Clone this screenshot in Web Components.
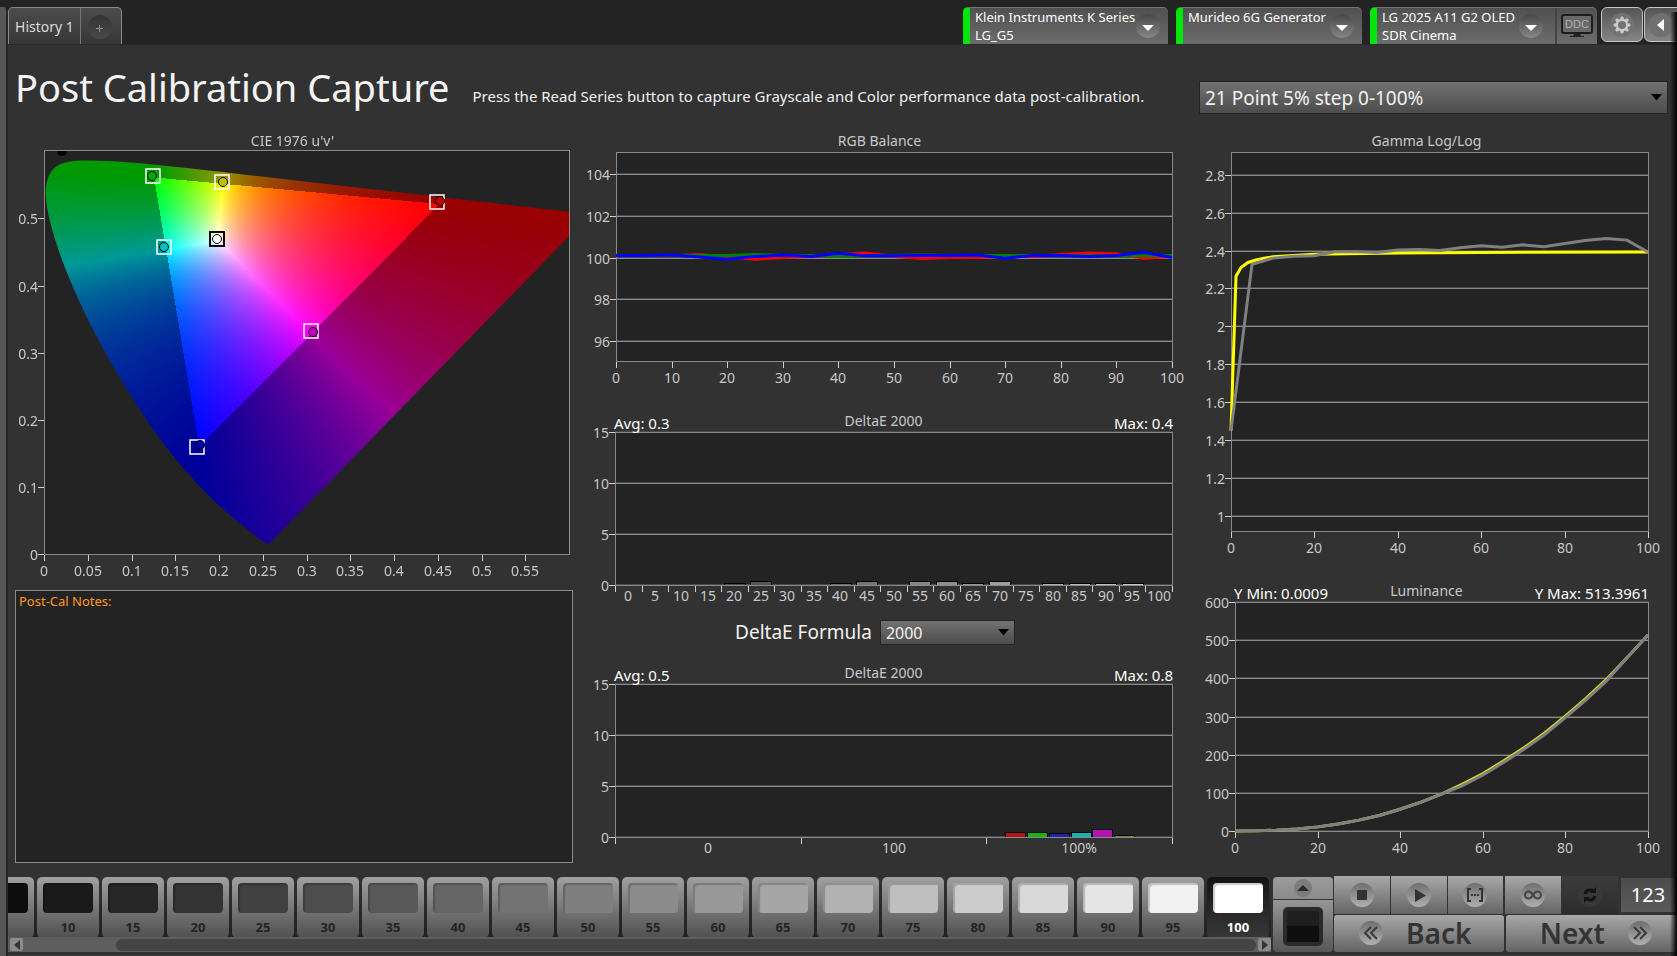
<!DOCTYPE html>
<html lang="en">
<head>
<meta charset="utf-8">
<meta name="viewport" content="width=device-width, initial-scale=1">
<title>Post Calibration Capture</title>
<style>
    * {
        box-sizing: border-box;
    }

    body {
        margin: 0;
        background-color: #232323;
        color: #e8e8e8;
        font-family: "Noto Sans", sans-serif;
        font-size: 14px;
    }
</style>
</head>
<body>

<app-shell>
    <history-tabs slot="tabs">History 1</history-tabs>
    <device-tab slot="devices" style="--tab-width: 205px">Klein Instruments K Series<br>LG_G5</device-tab>
    <device-tab slot="devices" style="--tab-width: 186px">Murideo 6G Generator</device-tab>
    <device-tab slot="devices" style="--tab-width: 227px" ddc>LG 2025 A11 G2 OLED<br>SDR Cinema</device-tab>
    <corner-buttons slot="devices"></corner-buttons>

    <page-heading slot="heading" heading="Post Calibration Capture">Press the Read Series button to capture Grayscale and Color performance data post-calibration.</page-heading>
    <drop-down slot="series" label="Read series" value="21 Point 5% step 0-100%"></drop-down>

    <data-chart id="cie" slot="left" heading="CIE 1976 u'v'"></data-chart>
    <notes-box slot="left">Post-Cal Notes:</notes-box>

    <data-chart id="balance" slot="center" heading="RGB Balance"></data-chart>
    <data-chart id="deltaGray" slot="center" heading="DeltaE 2000" low="Avg: 0.3" high="Max: 0.4"></data-chart>
    <formula-row slot="center"></formula-row>
    <data-chart id="deltaColor" slot="center" heading="DeltaE 2000" low="Avg: 0.5" high="Max: 0.8"></data-chart>

    <data-chart id="gamma" slot="right" heading="Gamma Log/Log"></data-chart>
    <data-chart id="luminance" slot="right" heading="Luminance" low="Y Min: 0.0009" high="Y Max: 513.3961"></data-chart>

    <patch-strip slot="footer"></patch-strip>
    <patch-preview slot="footer"></patch-preview>
    <transport-bar slot="footer"></transport-bar>
</app-shell>

<script>
class AppShell extends HTMLElement {

    constructor() {
        super();
        this.shadowDOM = this.attachShadow({mode: "open"});
    }

    connectedCallback() {
        this.shadowDOM.innerHTML = `
        <style>
        * {
            box-sizing: border-box;
        }

        :host {
            display: flex;
            position: relative;
            min-height: 100vh;
            overflow: hidden;
        }

        :host::after {
            content: "";
            position: absolute;
            top: 12px;
            right: 0;
            bottom: 0;
            width: 7px;
            background: linear-gradient(to right, rgba(0, 0, 0, 0), #000);
            pointer-events: none;
        }

        .rail {
            flex: none;
            width: 8px;
            margin-top: 7px;
            border-right: 2px solid #262626;
            border-top-right-radius: 4px;
            background-color: #565656;
        }

        .page {
            flex: 1;
            min-width: 0;
            display: flex;
            flex-direction: column;
        }

        header {
            display: flex;
            justify-content: space-between;
            align-items: flex-end;
            height: 44px;
        }

        .devices {
            display: flex;
            gap: 8px;
        }

        main {
            flex: 1;
            display: grid;
            grid-template-columns: minmax(0, 558fr) minmax(0, 600fr) minmax(0, 469fr);
            grid-template-rows: 87px auto;
            column-gap: 13px;
            padding: 0 9px 0 7px;
            border-top: 1px solid #2a2a2a;
            background-color: #323232;
        }

        .heading {
            grid-column: 1 / 3;
        }

        .series {
            padding-top: 36px;
        }

        .left, .center, .right {
            display: flex;
            flex-direction: column;
        }

        .left {
            gap: 9px;
        }

        .center {
            padding-right: 13px;
        }

        .right {
            padding: 0 19px 0 5px;
            gap: 24px;
        }

        footer {
            display: flex;
            height: 80px;
            padding-bottom: 3px;
            background-color: #323232;
            border-bottom: 1px solid #3c3c3c;
        }
        </style>
        <div class="rail"></div>
        <div class="page">
            <header>
                <slot name="tabs"></slot>
                <div class="devices"><slot name="devices"></slot></div>
            </header>
            <main>
                <div class="heading"><slot name="heading"></slot></div>
                <div class="series"><slot name="series"></slot></div>
                <div class="left"><slot name="left"></slot></div>
                <div class="center"><slot name="center"></slot></div>
                <div class="right"><slot name="right"></slot></div>
            </main>
            <footer><slot name="footer"></slot></footer>
        </div>
        `;
    }
}

class HistoryTabs extends HTMLElement {

    constructor() {
        super();
        this.shadowDOM = this.attachShadow({mode: "open"});
    }

    connectedCallback() {
        this.shadowDOM.innerHTML = `
        <style>
        :host {
            display: flex;
            box-sizing: border-box;
            width: 114px;
            height: 37px;
            border: 1px solid #8a8a8a;
            border-bottom: none;
            border-radius: 5px 5px 0 0;
            background: linear-gradient(#4c4c4c, #363636);
        }

        button {
            border: none;
            padding: 0;
            background: none;
            color: #dcdcdc;
            font: inherit;
        }

        .tab {
            flex: 1;
        }

        .add {
            display: grid;
            place-items: center;
            width: 41px;
            border-left: 1px solid #777;
        }
        </style>
        <button class="tab"><slot></slot></button>
        <button class="add" aria-label="Add history">
            <svg width="26" height="26" viewBox="0 0 26 26">
                <defs><linearGradient id="g" x2="0" y2="1"><stop stop-color="#333"/><stop offset="1" stop-color="#4a4a4a"/></linearGradient></defs>
                <circle cx="12" cy="14" r="12" fill="url(#g)"/>
                <path d="M8 15.500h7M11.500 12v7" stroke="#909090" fill="none"/>
            </svg>
        </button>
        `;
    }
}

class DeviceTab extends HTMLElement {

    constructor() {
        super();
        this.shadowDOM = this.attachShadow({mode: "open"});
    }

    connectedCallback() {
        const ddc = this.hasAttribute("ddc") ? `
        <button class="ddc" aria-label="Display control">
            <svg width="32" height="24" viewBox="0 0 32 24">
                <rect x="1" y="1" width="30" height="18" rx="2" fill="#686868" stroke="#1d1d1d" stroke-width="2"/>
                <path d="M13 20h6l1 2h3v1H9v-1h3z" fill="#222"/>
                <text x="16" y="14" text-anchor="middle" font-size="11" fill="#b0b0b0">DDC</text>
            </svg>
        </button>` : "";

        this.shadowDOM.innerHTML = `
        <style>
        :host {
            display: flex;
            box-sizing: border-box;
            width: var(--tab-width);
            height: 37px;
            overflow: hidden;
            border-left: 7px solid #00e60a;
            border-top: 1px solid #777;
            border-radius: 5px 5px 0 0;
            background: linear-gradient(#505050, #6c6c6c);
            color: #fff;
            font-size: 13px;
        }

        .name {
            flex: 1;
            min-width: 0;
            padding-left: 5px;
            line-height: 18px;
            white-space: nowrap;
        }

        button {
            flex: none;
            display: grid;
            place-items: center;
            padding: 0;
            border: none;
            background: none;
        }

        .open {
            width: 40px;
        }

        :host([ddc]) .open {
            width: 48px;
        }

        .ddc {
            width: 42px;
            border-left: 2px solid #444;
        }
        </style>
        <div class="name"><slot></slot></div>
        <button class="open" aria-label="Choose device">
            <svg width="26" height="26" viewBox="0 0 26 26">
                <defs><linearGradient id="g" x2="0" y2="1"><stop stop-color="#484848"/><stop offset="1" stop-color="#868686"/></linearGradient></defs>
                <circle cx="13" cy="13" r="12" fill="url(#g)"/>
                <path d="M7 12h12l-6 6z" fill="#fff"/>
            </svg>
        </button>
        ${ddc}
        `;
    }
}

class CornerButtons extends HTMLElement {

    constructor() {
        super();
        this.shadowDOM = this.attachShadow({mode: "open"});
    }

    connectedCallback() {
        let teeth = "";
        for (let i = 0; i < 8; i++) {
            teeth += `<path d="M11.500 7.500l.7-2.500h1.600l.7 2.500z" transform="rotate(${i * 45} 13 13)" fill="#ccc" stroke="#ccc"/>`;
        }

        this.shadowDOM.innerHTML = `
        <style>
        :host {
            display: flex;
            gap: 1px;
            width: 76px;
            height: 37px;
            margin-left: -4px;
            overflow: hidden;
        }

        button {
            flex: none;
            display: grid;
            place-items: center;
            width: 42px;
            height: 35px;
            padding: 0;
            border: 1px solid #c4c4c4;
            border-radius: 6px;
            background: linear-gradient(#555, #858585);
        }

        button + button {
            padding-right: 8px;
        }
        </style>
        <button aria-label="Settings">
            <svg width="26" height="26" viewBox="0 0 26 26">
                <circle cx="13" cy="13" r="12" fill="#737373"/>
                ${teeth}
                <circle cx="13" cy="13" r="5" fill="none" stroke="#ccc" stroke-width="2"/>
            </svg>
        </button>
        <button aria-label="Collapse">
            <svg width="26" height="26" viewBox="0 0 26 26">
                <circle cx="13" cy="13" r="12" fill="#707070"/>
                <path d="M16 7v12l-7-6z" fill="#fff"/>
            </svg>
        </button>
        `;
    }
}

class PageHeading extends HTMLElement {

    constructor() {
        super();
        this.shadowDOM = this.attachShadow({mode: "open"});
    }

    connectedCallback() {
        this.shadowDOM.innerHTML = `
        <style>
        :host {
            display: flex;
            align-items: baseline;
            gap: 23px;
            padding-top: 18px;
            white-space: nowrap;
        }

        h1 {
            margin: 0;
            color: #f4f4f4;
            font-size: 38px;
            font-weight: normal;
            line-height: 48px;
        }

        p {
            margin: 0;
            color: #f0f0f0;
            font-size: 15px;
        }
        </style>
        <h1>${this.getAttribute("heading")}</h1>
        <p><slot></slot></p>
        `;
    }
}

class DropDown extends HTMLElement {

    constructor() {
        super();
        this.shadowDOM = this.attachShadow({mode: "open"});
    }

    connectedCallback() {
        this.shadowDOM.innerHTML = `
        <style>
        :host {
            display: grid;
            align-items: center;
            justify-items: end;
        }

        select, svg {
            grid-area: 1 / 1;
        }

        select {
            width: 100%;
            height: var(--drop-height, 33px);
            padding: 0 5px;
            appearance: none;
            border: 1px solid #242424;
            border-radius: 0;
            background: linear-gradient(#727272, #4c4c4c);
            color: #f2f2f2;
            font-family: inherit;
            font-size: var(--drop-size, 19px);
        }

        svg {
            margin-right: 6px;
            pointer-events: none;
        }
        </style>
        <select aria-label="${this.getAttribute("label")}"><option>${this.getAttribute("value")}</option></select>
        <svg width="11" height="7" viewBox="0 0 11 7"><path d="M0 0h11l-5.500 6.500z" fill="#000"/></svg>
        `;
    }
}

class FormulaRow extends HTMLElement {

    constructor() {
        super();
        this.shadowDOM = this.attachShadow({mode: "open"});
    }

    connectedCallback() {
        this.shadowDOM.innerHTML = `
        <style>
        :host {
            display: flex;
            justify-content: center;
            align-items: center;
            gap: 8px;
            margin: 14px 9px 19px 0;
            color: #f2f2f2;
            font-size: 19px;
            line-height: 25px;
        }

        drop-down {
            width: 135px;
            --drop-height: 25px;
            --drop-size: 16px;
        }
        </style>
        <span>DeltaE Formula</span>
        <drop-down label="DeltaE Formula" value="2000"></drop-down>
        `;
    }
}

class NotesBox extends HTMLElement {

    constructor() {
        super();
        this.shadowDOM = this.attachShadow({mode: "open"});
    }

    connectedCallback() {
        this.shadowDOM.innerHTML = `
        <style>
        :host {
            display: flex;
            flex-direction: column;
            box-sizing: border-box;
            height: 273px;
            border: 1px solid #8a8a8a;
            background-color: #232323;
        }

        label {
            padding: 2px 3px;
            color: #ff9a1e;
            font-size: 13px;
            line-height: 16px;
        }

        textarea {
            flex: 1;
            padding: 0 3px;
            border: none;
            outline: none;
            resize: none;
            background: none;
            color: #ff9a1e;
            font: inherit;
        }
        </style>
        <label for="notes"><slot></slot></label>
        <textarea id="notes"></textarea>
        `;
    }
}

/* Chart with a left and a bottom axis. Set .config to draw it. */
class DataChart extends HTMLElement {

    constructor() {
        super();
        this.shadowDOM = this.attachShadow({mode: "open"});
    }

    set config(config) {
        this._config = config;
        this.render();
    }

    connectedCallback() {
        this.resizer = new ResizeObserver(() => this.draw());
        this.resizer.observe(this);
    }

    render() {
        const c = this._config;
        this.shadowDOM.innerHTML = `
        <style>
        :host {
            display: block;
            color: #c8c8c8;
        }

        .head {
            display: grid;
            grid-template-columns: minmax(0, 1fr) auto minmax(0, 1fr);
            position: relative;
            z-index: 1;
            height: ${c.headHeight || 20}px;
            padding-left: ${c.indent || 0}px;
            padding-right: ${c.right || 0}px;
            line-height: 18px;
            white-space: nowrap;
        }

        .low, .high {
            align-self: end;
            color: #fff;
            font-size: 15px;
        }

        .low {
            padding-left: ${c.left - (c.indent || 0) - 1}px;
        }

        .high {
            text-align: right;
        }

        .stage {
            display: grid;
            height: ${c.height + c.bottom}px;
            margin-bottom: ${c.after || 0}px;
        }

        .stage > * {
            grid-area: 1 / 1;
            display: block;
        }

        canvas {
            margin-left: ${c.left}px;
        }

        svg {
            width: 100%;
            height: 100%;
            overflow: visible;
            font-size: 14px;
        }
        </style>
        <div class="head">
            <span class="low">${this.getAttribute("low") || ""}</span>
            <span>${this.getAttribute("heading")}</span>
            <span class="high">${this.getAttribute("high") || ""}</span>
        </div>
        <div class="stage">
            ${c.gamut ? "<canvas></canvas>" : ""}
            <svg></svg>
        </div>
        `;
        this.draw();
    }

    draw() {
        const c = this._config;
        if (!c) return;

        const left = c.left;
        const width = Math.max(10, Math.round(this.clientWidth) - left - (c.right || 0));
        const height = c.height;
        const px = v => left + Math.round((v - c.x[0]) / (c.x[1] - c.x[0]) * (width - 1));
        const py = v => Math.round((c.y[1] - v) / (c.y[1] - c.y[0]) * (height - 1));
        const rect = (x, y, w, h, fill) => `<rect x="${x}" y="${y}" width="${w}" height="${h}" fill="${fill}"/>`;

        let out = "";
        if (!c.gamut) {
            out += rect(left, 0, width, height, "#232323");
        }

        for (const v of c.yTicks) {
            if (!c.gamut) {
                out += rect(left, py(v) - 1, width, 1, "#4a4a4a") + rect(left, py(v), width, 1, "#8a8a8a");
            }
            out += rect(left - 6, py(v), 6, 1, "#d0d0d0");
            out += `<text x="${left - 6}" y="${py(v) + 6}" text-anchor="end" fill="#c8c8c8">${v}</text>`;
        }

        if (c.bars) {
            for (const bar of c.bars) {
                const x0 = px(bar.at);
                const top = height - 1 - bar.h;
                out += rect(x0, top, bar.w, bar.h, "#000") + rect(x0 + 1, top + 1, bar.w - 2, bar.h - 1, bar.fill);
            }
        }

        out += `<path d="M${left} 0h${width}v${height}h${-width}zm1 1v${height - 2}h${width - 2}v${2 - height}z" fill="#8a8a8a"/>`;

        for (const v of c.xMarks || c.xTicks) {
            out += rect(px(v), height, 1, 6, "#d0d0d0");
        }
        c.xTicks.forEach((v, i) => {
            const label = c.xLabels ? c.xLabels[i] : v;
            out += `<text x="${px(v)}" y="${height + c.bottom - 5}" text-anchor="middle" fill="#c8c8c8">${label}</text>`;
        });

        for (const line of c.lines || []) {
            const points = line.points.map(p => px(p[0]) + "," + (c.y[1] - p[1]) / (c.y[1] - c.y[0]) * (height - 1)).join(" ");
            out += `<polyline points="${points}" fill="none" stroke="${line.color}" stroke-width="${line.width || 3}"/>`;
        }

        if (c.gamut) {
            out += this.markers(px, py);
            this.paintGamut(width, height);
        }

        this.shadowDOM.querySelector("svg").innerHTML = out;
    }

    markers(px, py) {
        let out = `<path d="M${px(.021) - 5} 1a5 5 0 0 0 10 0z" fill="#000"/>`;
        for (const m of this._config.markers) {
            out += `<rect x="${px(m.u) - 7}" y="${py(m.v) - 7}" width="14" height="14" fill="none" stroke="${m.box || "#fff"}" stroke-width="${m.box ? 2 : 1.500}"/>`;
            out += `<circle cx="${px(m.mu)}" cy="${py(m.mv)}" r="4.500" fill="${m.fill}" stroke="#000"/>`;
        }
        return out;
    }

    paintGamut(width, height) {
        const canvas = this.shadowDOM.querySelector("canvas");
        const c = this._config;
        canvas.width = width;
        canvas.height = height;
        const ctx = canvas.getContext("2d");
        const image = ctx.createImageData(width, height);
        const [r, g, b] = c.gamut;
        const side = (p, q, u, v) => (q[0] - p[0]) * (v - p[1]) - (q[1] - p[1]) * (u - p[0]);

        for (let j = 0; j < height; j++) {
            const v = c.y[1] - j / height * c.y[1] + .0005;
            for (let i = 0; i < width; i++) {
                const u = i / width * c.x[1];
                // Y = 1, from u'v' back to XYZ
                const X = 9 * u / (4 * v);
                const Z = (12 - 3 * u - 20 * v) / (4 * v);
                const rgb = [
                    3.2406 * X - 1.5372 - .4986 * Z,
                    -.9689 * X + 1.8758 + .0415 * Z,
                    .0557 * X - .204 + 1.057 * Z
                ].map(n => Math.max(n, 0));
                const max = Math.max(...rgb);
                const inside = side(r, g, u, v) > 0 && side(g, b, u, v) > 0 && side(b, r, u, v) > 0;
                const level = inside ? 255 : 153;
                const at = (j * width + i) * 4;
                for (let k = 0; k < 3; k++) {
                    image.data[at + k] = rgb[k] / max * level;
                }
                image.data[at + 3] = 255;
            }
        }
        ctx.putImageData(image, 0, 0);

        // keep only what lies within the spectral locus
        const pts = c.locus.map(([x, y]) => {
            const d = -2 * x + 12 * y + 3;
            return [4 * x / d / c.x[1] * width, (1 - 9 * y / d / c.y[1]) * height];
        });
        ctx.globalCompositeOperation = "destination-in";
        ctx.beginPath();
        ctx.moveTo(pts[0][0], pts[0][1]);
        for (let i = 1; i < pts.length - 1; i++) {
            const mx = (pts[i][0] + pts[i + 1][0]) / 2;
            const my = (pts[i][1] + pts[i + 1][1]) / 2;
            ctx.quadraticCurveTo(pts[i][0], pts[i][1], mx, my);
        }
        ctx.lineTo(pts[pts.length - 1][0], pts[pts.length - 1][1]);
        ctx.closePath();
        ctx.fill();
        ctx.globalCompositeOperation = "destination-over";
        ctx.fillStyle = "#232323";
        ctx.fillRect(0, 0, width, height);
    }
}

class PatchStrip extends HTMLElement {

    constructor() {
        super();
        this.shadowDOM = this.attachShadow({mode: "open"});
    }

    connectedCallback() {
        let patches = `<button class="patch" aria-label="Level 5"><span class="tone" style="background-color: #0d0d0d"></span></button>`;
        for (let level = 10; level <= 100; level += 5) {
            const tone = Math.round(level * 2.55);
            patches += `
            <button class="${level === 100 ? "patch on" : "patch"}">
                <span class="tone" style="background-color: rgb(${tone}, ${tone}, ${tone})"></span>
                <span>${level}</span>
            </button>`;
        }

        this.shadowDOM.innerHTML = `
        <style>
        * {
            box-sizing: border-box;
        }

        :host {
            flex: 1;
            min-width: 0;
            display: flex;
            flex-direction: column;
        }

        .patches {
            display: flex;
            justify-content: flex-end;
            gap: 3px;
            height: 62px;
            padding: 1px 2px 0 0;
            overflow: hidden;
            background: linear-gradient(#323232, #222);
        }

        .patch {
            flex: none;
            display: flex;
            flex-direction: column;
            align-items: center;
            gap: 5px;
            width: 62px;
            height: 61px;
            padding: 6px 0 0;
            border: none;
            border-radius: 5px;
            background: linear-gradient(#a0a0a0, #505050);
            color: #242424;
            font-family: inherit;
            font-size: 13px;
            font-weight: bold;
            line-height: 18px;
        }

        .on {
            background: linear-gradient(#141414, #383838);
            color: #fff;
        }

        .tone {
            width: 50px;
            height: 30px;
            border-radius: 4px;
            box-shadow: inset 2px 2px 1px rgba(0, 0, 0, 0.2);
        }

        .scroll {
            display: flex;
            justify-content: space-between;
            align-items: center;
            height: 15px;
            padding: 0 0 0 2px;
            background-color: #5e5e5e;
        }

        .scroll button {
            display: grid;
            place-items: center;
            width: 13px;
            height: 13px;
            padding: 0;
            border: none;
            border-radius: 2px;
            background-color: #8a8a8a;
        }

        .thumb {
            flex: 1;
            height: 12px;
            margin: 0 2px 0 93px;
            border-radius: 6px;
            background-color: #444;
        }
        </style>
        <div class="patches">${patches}</div>
        <div class="scroll">
            <button aria-label="Scroll left"><svg width="6" height="10"><path d="M6 0v10L0 5z" fill="#333"/></svg></button>
            <div class="thumb"></div>
            <button aria-label="Scroll right"><svg width="6" height="10"><path d="M0 0v10l6-5z" fill="#333"/></svg></button>
        </div>
        `;
    }
}

class PatchPreview extends HTMLElement {

    constructor() {
        super();
        this.shadowDOM = this.attachShadow({mode: "open"});
    }

    connectedCallback() {
        this.shadowDOM.innerHTML = `
        <style>
        :host {
            flex: none;
            display: flex;
            flex-direction: column;
            width: 60px;
            margin: 1px 1px 0 2px;
            overflow: hidden;
            border-radius: 4px;
        }

        button {
            display: grid;
            place-items: center;
            padding: 0;
            border: none;
        }

        .up {
            height: 23px;
            border-bottom: 1px solid #333;
            background: linear-gradient(#9c9c9c, #8a8a8a);
        }

        .window {
            flex: 1;
            background: linear-gradient(#969696, #565656);
        }

        .window span {
            box-sizing: border-box;
            width: 40px;
            height: 39px;
            border: 4px solid #2a2a2a;
            border-radius: 5px;
            background: linear-gradient(#1e1e1e 50%, #0f0f0f 50%);
        }
        </style>
        <button class="up" aria-label="Show patch window">
            <svg width="20" height="20" viewBox="0 0 20 20">
                <circle cx="10" cy="10" r="9" fill="#7c7c7c"/>
                <path d="M4 13h12l-6-6z" fill="#2a2a2a"/>
            </svg>
        </button>
        <button class="window" aria-label="Patch window"><span></span></button>
        `;
    }
}

class TransportBar extends HTMLElement {

    constructor() {
        super();
        this.shadowDOM = this.attachShadow({mode: "open"});
    }

    icon(shape, fill = "url(#disc)") {
        return `<svg width="26" height="26" viewBox="0 0 26 26"><circle cx="13" cy="13" r="12" fill="${fill}"/>${shape}</svg>`;
    }

    connectedCallback() {
        this.shadowDOM.innerHTML = `
        <style>
        * {
            box-sizing: border-box;
        }

        :host {
            flex: none;
            display: flex;
            flex-direction: column;
            gap: 1px;
            width: 343px;
        }

        .defs {
            position: absolute;
            width: 0;
            height: 0;
        }

        .row {
            flex: 1;
            display: flex;
            gap: 1px;
        }

        button {
            flex: 1;
            display: flex;
            justify-content: center;
            align-items: center;
            padding: 0;
            border: none;
            background: linear-gradient(#a8a8a8, #646464);
            color: #333;
            font-family: inherit;
            font-size: 28px;
            font-weight: 600;
            line-height: 36px;
        }

        .gap {
            margin-left: 1px;
        }

        .sync {
            background: linear-gradient(#3c3c3c, #2c2c2c);
        }

        .count {
            flex: none;
            align-self: center;
            width: 54px;
            height: 34px;
            margin: 0 2px;
            background: linear-gradient(#4c4c4c, #5a5a5a);
            color: #fff;
            font-size: 20px;
            font-weight: normal;
            line-height: 34px;
        }

        .nav {
            gap: 22px;
            border-radius: 3px;
        }

        .next {
            padding-left: 10px;
        }

        .back {
            padding-right: 8px;
        }
        </style>
        <svg class="defs"><defs><linearGradient id="disc" x2="0" y2="1"><stop stop-color="#6e6e6e"/><stop offset="1" stop-color="#b0b0b0"/></linearGradient></defs></svg>
        <div class="row">
            <button aria-label="Stop">${this.icon(`<path d="M8 8h10v10H8z" fill="#333"/>`)}</button>
            <button aria-label="Play">${this.icon(`<path d="M9 7l11 6.500-11 6.500z" fill="#333"/>`)}</button>
            <button aria-label="Read series">${this.icon(`<path d="M9 7H6v12h3M17 7h3v12h-3" fill="none" stroke="#333" stroke-width="2"/><path d="M9 12h2v2H9zM12 12h2v2h-2zM15 12h2v2h-2z" fill="#333"/>`)}</button>
            <button class="gap" aria-label="Read continuously">${this.icon(`<path d="M13 13c-1.500-2.500-3-3.500-4.500-3.500a3.500 3.500 0 0 0 0 7c1.500 0 3-1 4.500-3.500s3-3.500 4.500-3.500a3.500 3.500 0 0 1 0 7c-1.500 0-3-1-4.500-3.500z" fill="none" stroke="#444" stroke-width="2"/>`)}</button>
            <button class="sync" aria-label="Repeat">${this.icon(`<path d="M8 12a5 5 0 0 1 8-3M18 14a5 5 0 0 1-8 3" fill="none" stroke="#141414" stroke-width="3"/><path d="M13 11h6V5zM13 15H7v6z" fill="#141414"/>`, "#383838")}</button>
            <button class="count">123</button>
        </div>
        <div class="row">
            <button class="nav back">${this.icon(`<path d="M13 7l-6 6 6 6M19 7l-6 6 6 6" fill="none" stroke="#3a3a3a" stroke-width="2"/>`)}<span>Back</span></button>
            <button class="nav next gap"><span>Next</span>${this.icon(`<path d="M7 7l6 6-6 6M13 7l6 6-6 6" fill="none" stroke="#3a3a3a" stroke-width="2"/>`)}</button>
        </div>
        `;
    }
}

customElements.define("app-shell", AppShell);
customElements.define("history-tabs", HistoryTabs);
customElements.define("device-tab", DeviceTab);
customElements.define("corner-buttons", CornerButtons);
customElements.define("page-heading", PageHeading);
customElements.define("drop-down", DropDown);
customElements.define("formula-row", FormulaRow);
customElements.define("notes-box", NotesBox);
customElements.define("data-chart", DataChart);
customElements.define("patch-strip", PatchStrip);
customElements.define("patch-preview", PatchPreview);
customElements.define("transport-bar", TransportBar);

const range = (from, to, step) => {
    const list = [];
    for (let v = from; v <= to; v += step) list.push(v);
    return list;
};
const every5 = values => values.map((v, i) => [i * 5, v]);
const chart = id => document.querySelector("#" + id);

chart("cie").config = {
    headHeight: 18,
    left: 29, right: 3, height: 405, bottom: 26,
    x: [0, .6], y: [0, .602],
    xTicks: [0, .05, .1, .15, .2, .25, .3, .35, .4, .45, .5, .55],
    yTicks: [0, .1, .2, .3, .4, .5],
    gamut: [[.4507, .5229], [.125, .5625], [.1765, .162]],
    markers: [
        {u: .125, v: .564, mu: .1234, mv: .564, fill: "#00a800"},
        {u: .2038, v: .5539, mu: .2046, mv: .5547, fill: "#c0c000"},
        {u: .4497, v: .5246, mu: .4529, mv: .5267, fill: "#c00000"},
        {u: .198, v: .469, mu: .198, mv: .469, fill: "#fff", box: "#000"},
        {u: .1377, v: .4575, mu: .1377, mv: .4575, fill: "#00c0c0"},
        {u: .3057, v: .3319, mu: .3074, mv: .3309, fill: "#c000c0"},
        {u: .1754, v: .159, mu: .1781, mv: .1629, fill: "#0000a8"}
    ],
    locus: [
        [.1741, .005], [.1714, .0051], [.1644, .0109], [.1566, .0177], [.144, .0297], [.1241, .0578],
        [.1096, .0868], [.0913, .1327], [.0687, .2007], [.0454, .295], [.0235, .4127], [.0082, .5384],
        [.0039, .6548], [.0139, .7502], [.0389, .812], [.0743, .8338], [.1142, .8262], [.1547, .8059],
        [.2296, .7543], [.3016, .6923], [.3731, .6245], [.4441, .5547], [.5125, .4866], [.5752, .4242],
        [.627, .3725], [.6658, .334], [.6915, .3083], [.719, .2809], [.7347, .2653]
    ]
};

chart("balance").config = {
    left: 30, height: 210, bottom: 26, after: 24,
    x: [0, 100], y: [95.05, 105.05],
    xTicks: range(0, 100, 10),
    yTicks: [96, 98, 100, 102, 104],
    lines: [
        {color: "#f00", points: every5([100.1, 100.1, 100.08, 100.15, 100.02, 99.92, 100, 100.05, 100.15, 100.22, 100.05, 99.95, 100, 100, 100.05, 100.05, 100.15, 100.22, 100.18, 99.97, 100.05])},
        {color: "#008000", points: every5([100.1, 100.1, 100.1, 100.1, 100.1, 100.15, 100.1, 100.1, 100.06, 100.08, 100.1, 100.12, 100.1, 100.1, 100.1, 100.1, 100.1, 100.1, 100.08, 100.08, 100.1])},
        {color: "#00f", points: every5([100.1, 100.1, 100.12, 100.03, 99.92, 100.05, 100.12, 100.05, 100.2, 100.08, 100.08, 100.1, 100.1, 100.12, 99.97, 100.1, 100.1, 100.05, 100.1, 100.25, 100])}
    ]
};

// bar heights in pixels per gray level
const grayBars = {20: 2, 25: 4, 40: 2, 45: 4, 55: 4, 60: 4, 65: 2, 70: 4, 80: 2, 85: 2, 90: 2, 95: 2};

chart("deltaGray").config = {
    indent: 8,
    left: 29, height: 154, bottom: 20,
    x: [0, 21], y: [0, 15],
    xMarks: range(0, 21, 1),
    xTicks: range(0, 20, 1).map(v => v + .5),
    xLabels: range(0, 100, 5),
    yTicks: [0, 5, 10, 15],
    bars: Object.keys(grayBars).map(level => {
        const tone = Math.round(level * 1.7 + 40);
        return {at: level / 5 + .1, w: 22, h: grayBars[level], fill: `rgb(${tone}, ${tone}, ${tone})`};
    })
};

chart("deltaColor").config = {
    indent: 8,
    left: 29, height: 154, bottom: 20,
    x: [0, 3], y: [0, 15],
    xMarks: [0, 1, 2, 3],
    xTicks: [.5, 1.5, 2.5],
    xLabels: ["0", "100", "100%"],
    yTicks: [0, 5, 10, 15],
    bars: [
        {at: 2.1, w: 21, h: 5, fill: "#b41414"},
        {at: 2.22, w: 21, h: 5, fill: "#14b414"},
        {at: 2.335, w: 21, h: 4, fill: "#2222b4"},
        {at: 2.455, w: 21, h: 5, fill: "#14b4b4"},
        {at: 2.57, w: 21, h: 8, fill: "#b414b4"},
        {at: 2.69, w: 21, h: 2, fill: "#80803c"}
    ]
};

chart("gamma").config = {
    left: 27, height: 380, bottom: 26,
    x: [0, 100], y: [.92, 2.92],
    xTicks: range(0, 100, 20),
    yTicks: [1, 1.2, 1.4, 1.6, 1.8, 2, 2.2, 2.4, 2.6, 2.8],
    lines: [
        {color: "#ff0", points: [[0, 1.45], [1.3, 2.265], [2.5, 2.31], [4, 2.337], [6, 2.35], [8, 2.36], [10, 2.367], [20, 2.38], [40, 2.387], [60, 2.39], [100, 2.392]]},
        {color: "#808080", points: every5([1.45, 2.327, 2.36, 2.37, 2.373, 2.393, 2.393, 2.39, 2.403, 2.405, 2.4, 2.415, 2.425, 2.418, 2.43, 2.42, 2.437, 2.453, 2.463, 2.455, 2.392])}
    ]
};

const luminance = level => 513.3961 * Math.pow(level / 100, 2.4);

chart("luminance").config = {
    left: 31, height: 230, bottom: 26,
    x: [0, 100], y: [0, 600],
    xTicks: range(0, 100, 20),
    yTicks: range(0, 600, 100),
    lines: [
        {color: "#d8d820", points: range(0, 100, 5).map(v => [v, luminance(v)])},
        {color: "#808080", points: range(0, 100, 5).map(v => [v, luminance(v) - (v > 50 && v < 95 ? 4 : 0)])}
    ]
};
</script>
</body>
</html>
